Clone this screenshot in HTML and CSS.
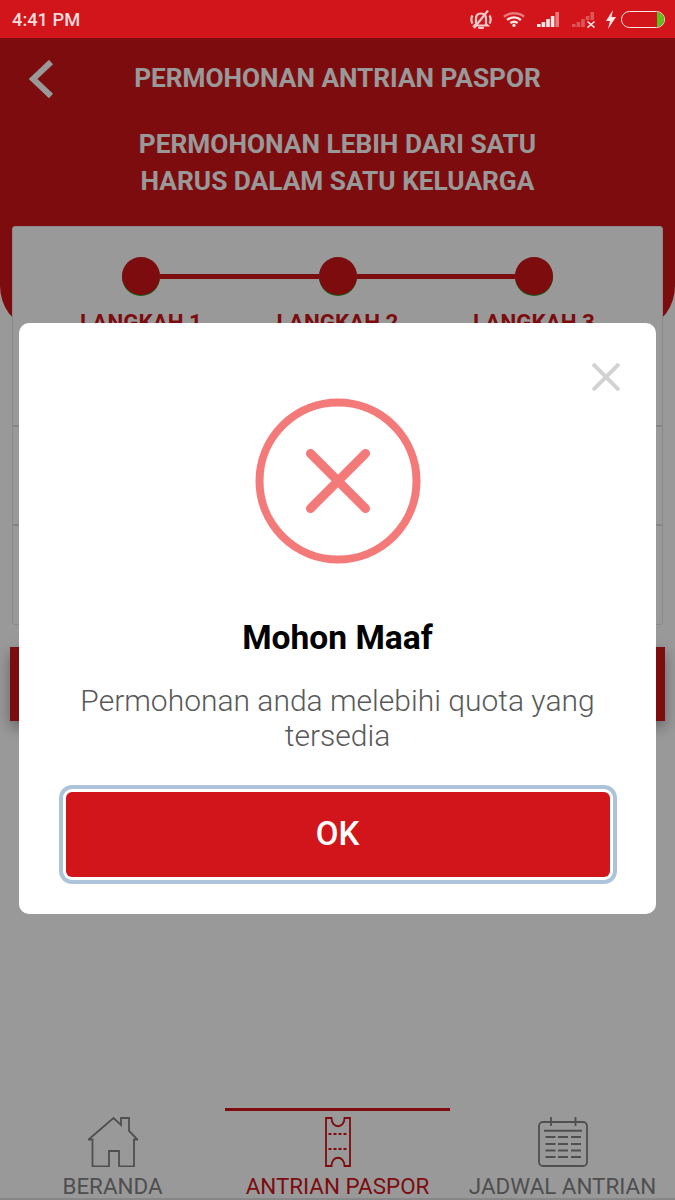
FILE: index.html
```html
<!DOCTYPE html>
<html>
    <head>
        <title>Permohonan Antrian Paspor</title>
        <meta name="viewport" content="width=device-width, initial-scale=1.0">
        <link rel="stylesheet" href="styles.css">
    </head>
    <body>
        <div class="statusBar">
            <span class="time">4:41 PM</span>
            <div class="statusIcons">
                <svg class="icoBell" width="22" height="19" viewBox="0 0 22 19" fill="none" stroke="#f6c9ca" stroke-width="2.200">
                    <path d="M6 14V8.500c0-3 2-5 5-5s5 2 5 5V14l1.500 1.500h-13z"/>
                    <path d="M9 17.800h4" stroke-linecap="round"/>
                    <path d="M2.500 5.500c-1.500 2-1.500 6 0 8M19.500 5.500c1.500 2 1.500 6 0 8"/>
                    <path d="M4 18L18 0.500"/>
                </svg>
                <svg class="icoWifi" width="22" height="17" viewBox="0 0 24 17" fill="none" stroke-width="2.600">
                    <path d="M1 5.500c6-5 16-5 22 0" stroke="#e8797c"/>
                    <path d="M4.500 9c4.500-3.500 10.500-3.500 15 0" stroke="#fbe6e6"/>
                    <path d="M8 12.300c2.500-1.800 5.500-1.800 8 0" stroke="#fbe6e6"/>
                    <circle cx="12" cy="15" r="1.800" fill="#fbe6e6" stroke="none"/>
                </svg>
                <svg class="icoSignal" width="23" height="17" viewBox="0 0 23 17">
                    <path d="M0 13h3.600v3H0zM4.600 11h3.600v5H4.600zM9.200 8h3.600v8H9.200zM13.800 5h3.600v11h-3.600z" fill="#fbe6e6"/>
                    <path d="M18.400 1H22v15h-3.600z" fill="#e8797c"/>
                </svg>
                <svg class="icoNoSignal" width="25" height="17" viewBox="0 0 25 17">
                    <path d="M0 13h3.600v3H0zM4.600 11h3.600v5H4.600zM9.200 8h3.600v8H9.200zM13.800 5h3.600v4h-3.600zM18.400 1H22v8h-3.600z" fill="#de5558"/>
                    <path d="M15.500 10.500l7 6M22.500 10.500l-7 6" stroke="#fbe6e6" stroke-width="1.600"/>
                </svg>
                <svg class="icoBolt" width="10" height="19" viewBox="0 0 10 19">
                    <path d="M7 0L0 11h4l-2 8 8-12H5.500z" fill="#fbe6e6"/>
                </svg>
                <div class="battery"><div class="batteryLevel"></div></div>
            </div>
        </div>

        <div class="page">
            <div class="topPanel">
                <div class="titleRow">
                    <svg class="backIcon" width="26" height="38" viewBox="0 0 26 38" fill="none" stroke="#fff" stroke-width="6">
                        <path d="M22 2L4 19l18 17"/>
                    </svg>
                    <h1>PERMOHONAN ANTRIAN PASPOR</h1>
                </div>
                <p class="notice">PERMOHONAN LEBIH DARI SATU<br>HARUS DALAM SATU KELUARGA</p>
            </div>

            <div class="formCard">
                <div class="stepBox">
                    <div class="stepTrack">
                        <div class="dot"></div>
                        <div class="stepLine"></div>
                        <div class="dot"></div>
                        <div class="stepLine"></div>
                        <div class="dot"></div>
                    </div>
                    <div class="stepLabels">
                        <span>LANGKAH 1</span>
                        <span>LANGKAH 2</span>
                        <span>LANGKAH 3</span>
                    </div>
                </div>
                <div class="formRow"></div>
                <div class="formRow"></div>
            </div>

            <div class="nextBtn"></div>

            <div class="tabBar">
                <div class="tab">
                    <svg width="50" height="50" viewBox="0 0 50 50" fill="none" stroke="#848484" stroke-width="1.800">
                        <path d="M0.500 22.500L25.500 1 33 8V1h8v13l8.500 8.500H46v27H31V34H21v15.500H4.500v-27z"/>
                    </svg>
                    <span>BERANDA</span>
                </div>
                <div class="tab active">
                    <svg width="26" height="50" viewBox="0 0 26 50" fill="none" stroke="#d0141a" stroke-width="1.800">
                        <path d="M1 1h5.500c0 11 13 11 13 0H25v48h-5.500c0-11-13-11-13 0H1z"/>
                        <path d="M3.500 17h19M3.500 32h19" stroke-dasharray="3 2"/>
                    </svg>
                    <span>ANTRIAN PASPOR</span>
                </div>
                <div class="tab">
                    <svg width="50" height="50" viewBox="0 0 50 50" fill="none" stroke="#848484" stroke-width="1.800">
                        <rect x="1" y="5" width="48" height="44" rx="4"/>
                        <path d="M13 0v9M37.500 0v9"/>
                        <path d="M6 13.700h38" stroke-width="2"/>
                        <path d="M7.500 20h10M20 20h10M33 20h10M7.500 27h10M20 27h10M33 27h10M7.500 33.500h10M20 33.500h10M33 33.500h10M7.500 40h10M20 40h10M33 40h10"/>
                    </svg>
                    <span>JADWAL ANTRIAN</span>
                </div>
            </div>
        </div>

        <div class="dimmer">
            <div class="modal">
                <svg class="closeIcon" width="28" height="28" viewBox="0 0 28 28" stroke="#d2d2d2" stroke-width="4">
                    <path d="M1 1l26 26M27 1L1 27"/>
                </svg>
                <svg class="errorIcon" width="166" height="166" viewBox="0 0 166 166" fill="none" stroke="#f47a7a">
                    <circle cx="83" cy="83" r="78.500" stroke-width="8"/>
                    <path d="M55.500 55.500l55 55M110.500 55.500l-55 55" stroke-width="9" stroke-linecap="round"/>
                </svg>
                <h2>Mohon Maaf</h2>
                <p>Permohonan anda melebihi quota yang tersedia</p>
                <button class="okBtn">OK</button>
            </div>
        </div>
    </body>
</html>
```

FILE: styles.css
```css
*{
    margin: 0;
    padding: 0;
    box-sizing: border-box;
}

body{
    width: 675px;
    height: 1200px;
    overflow: hidden;
    position: relative;
    display: flex;
    flex-direction: column;
    background-color: #fff;
    font-family: Roboto, sans-serif;
}

.statusBar{
    height: 38px;
    flex-shrink: 0;
    display: flex;
    align-items: center;
    justify-content: space-between;
    padding: 0 10px 0 12px;
    background-color: #d2151a;
}

.time{
    font-size: 18.300px;
    font-weight: 500;
    color: #fbdcdc;
}

.statusIcons{
    display: flex;
    align-items: center;
}

.icoWifi{
    margin-left: 11px;
}

.icoSignal{
    margin-left: 12px;
}

.icoNoSignal{
    margin-left: 12px;
}

.icoBolt{
    margin-left: 9px;
}

.battery{
    width: 44px;
    height: 17px;
    margin-left: 5px;
    border: 1.500px solid #fbe6e6;
    border-radius: 9px;
    display: flex;
    justify-content: flex-end;
    overflow: hidden;
}

.batteryLevel{
    width: 7px;
    background-color: #5cc21a;
}

.page{
    flex: 1;
    display: flex;
    flex-direction: column;
    min-height: 0;
}

.topPanel{
    height: 287px;
    background-color: #d0141a;
    border-radius: 0 0 30px 30px / 0 0 40px 40px;
    color: #fff;
    font-weight: 700;
    text-align: center;
}

.titleRow{
    height: 80px;
    display: flex;
    align-items: center;
    justify-content: center;
    position: relative;
}

.backIcon{
    position: absolute;
    left: 29px;
    top: 22px;
}

h1{
    font-size: 26.200px;
    font-weight: 700;
}

.notice{
    margin-top: 8px;
    font-size: 26.250px;
    line-height: 37px;
}

.formCard{
    margin: -99px 12px 0;
    height: 399px;
    background-color: #fff;
    border: 1px solid #e6e6e6;
    border-radius: 3px;
    display: flex;
    flex-direction: column;
}

.stepBox{
    height: 201px;
    padding-top: 30px;
    border-bottom: 2px solid #dcdcdc;
}

.stepTrack{
    width: 431px;
    margin: 0 auto;
    display: flex;
    align-items: center;
}

.dot{
    width: 38px;
    height: 38px;
    border-radius: 50%;
    background-color: #d0141a;
    box-shadow: 0 1px 0 #2a9a2a;
}

.stepLine{
    flex: 1;
    height: 5px;
    background-color: #d0141a;
}

.stepLabels{
    display: grid;
    grid-template-columns: repeat(3, 196.500px);
    justify-content: center;
    margin-top: 14px;
    text-align: center;
    font-size: 22.400px;
    font-weight: 700;
    color: #d0141a;
}

.formRow{
    height: 99px;
    border-bottom: 2px solid #dcdcdc;
}

.formRow:last-child{
    border-bottom: none;
}

.nextBtn{
    height: 74px;
    margin: 22px 10px 0;
    background-color: #d0141a;
    box-shadow: 0 6px 14px rgba(0,0,0,0.35);
}

.tabBar{
    margin-top: auto;
    height: 92px;
    display: grid;
    grid-template-columns: 225px 225px 225px;
    box-shadow: inset 0 -2px 0 #e2e2e2;
}

.tab{
    display: flex;
    flex-direction: column;
    align-items: center;
    padding-top: 6px;
    border-top: 3px solid transparent;
    font-size: 22.400px;
    color: #848484;
    white-space: nowrap;
}

.tab span{
    margin-top: 6px;
}

.tab.active{
    border-top-color: #d0141a;
    color: #d0141a;
}

.dimmer{
    position: absolute;
    top: 38px;
    left: 0;
    right: 0;
    bottom: 0;
    padding: 285px 19px 0;
    background-color: rgba(0,0,0,0.4);
}

.modal{
    position: relative;
    height: 591px;
    padding-top: 75px;
    background-color: #fff;
    border-radius: 10px;
    display: flex;
    flex-direction: column;
    align-items: center;
    text-align: center;
}

.closeIcon{
    position: absolute;
    top: 40px;
    right: 36px;
}

h2{
    margin-top: 54px;
    font-size: 33.600px;
    line-height: 39px;
    font-weight: 700;
    color: #000;
}

.modal p{
    width: 560px;
    margin-top: 26px;
    font-size: 30px;
    font-weight: 300;
    line-height: 35px;
    color: #595959;
}

.okBtn{
    width: 544px;
    height: 85px;
    margin-top: 39px;
    padding-bottom: 2px;
    border: none;
    border-radius: 6px;
    background-color: #d2151a;
    box-shadow: 0 0 0 3px #fff, 0 0 0 7px #adc3d9;
    color: #fff;
    font-family: Roboto, sans-serif;
    font-size: 33px;
    font-weight: 500;
}
```
